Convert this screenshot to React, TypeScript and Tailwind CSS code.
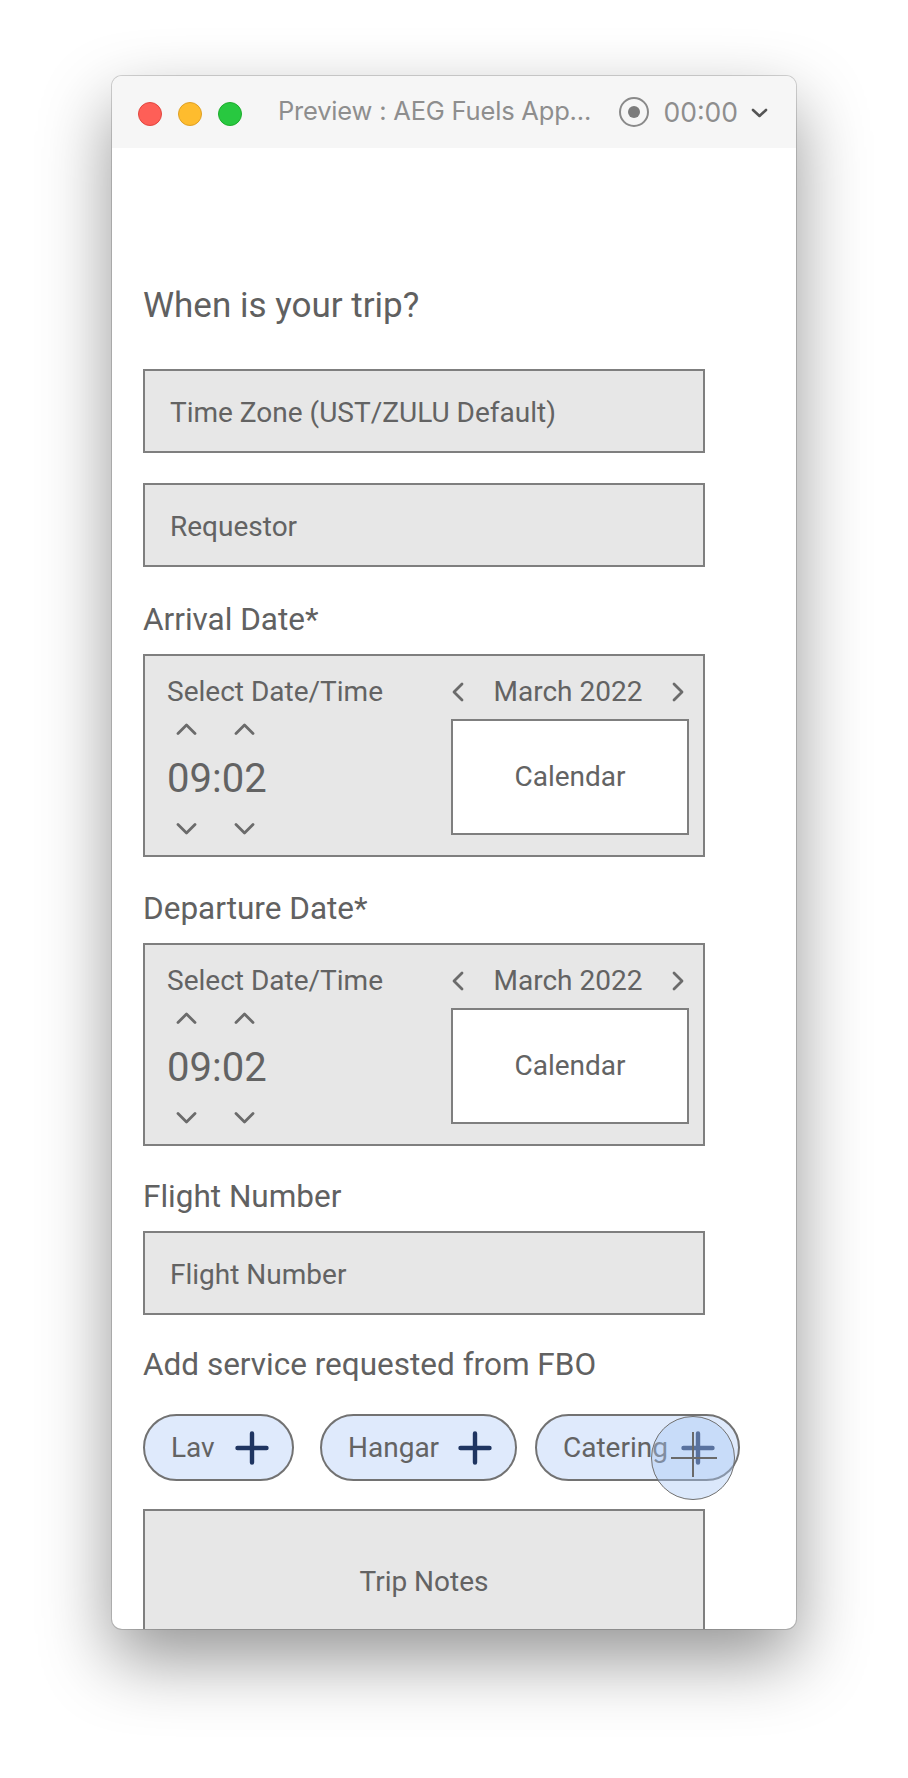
import React from "react";

const Up = () => (
  <svg width="21" height="12" viewBox="0 0 21 12" fill="none">
    <path d="M2 10.5 L10.5 2 L19 10.5" stroke="#6b6b6b" strokeWidth="2.8" strokeLinecap="round" strokeLinejoin="round" />
  </svg>
);
const Down = () => (
  <svg width="21" height="12" viewBox="0 0 21 12" fill="none">
    <path d="M2 1.5 L10.5 10 L19 1.5" stroke="#6b6b6b" strokeWidth="2.8" strokeLinecap="round" strokeLinejoin="round" />
  </svg>
);
const Left = () => (
  <svg width="13" height="20" viewBox="0 0 13 20" fill="none">
    <path d="M11 2 L3 10 L11 18" stroke="#6b6b6b" strokeWidth="2.8" strokeLinecap="round" strokeLinejoin="round" />
  </svg>
);
const Right = () => (
  <svg width="13" height="20" viewBox="0 0 13 20" fill="none">
    <path d="M2 2 L10 10 L2 18" stroke="#6b6b6b" strokeWidth="2.8" strokeLinecap="round" strokeLinejoin="round" />
  </svg>
);
const Plus = () => (
  <svg width="34" height="34" viewBox="0 0 34 34" fill="none">
    <path d="M17 2.5 V31.5 M2.5 17 H31.5" stroke="#1f3561" strokeWidth="4.4" strokeLinecap="round" />
  </svg>
);

function InputBox({ text }: { text: string }) {
  return (
    <div className="w-[562px] h-[84px] bg-[#e7e7e7] border-2 border-[#7f7f7f] flex items-center pl-[25px] pt-[4px] text-[28px] leading-[34px] text-[#636363]">
      {text}
    </div>
  );
}

function Label({ text, mt }: { text: string; mt: string }) {
  return <div className={`${mt} text-[31.5px] leading-[36px] text-[#616161]`}>{text}</div>;
}

function DateBox() {
  return (
    <div className="mt-[16px] w-[562px] h-[203px] bg-[#e7e7e7] border-2 border-[#7f7f7f] flex">
      <div className="pl-[22px] pt-[18px] flex flex-col">
        <div className="text-[28px] leading-[36px] text-[#636363]">Select Date/Time</div>
        <div className="mt-[13px] ml-[9px] flex gap-[37px]">
          <Up />
          <Up />
        </div>
        <div className="mt-[20px] text-[40px] leading-[48px] text-[#636363]">09:02</div>
        <div className="mt-[20px] ml-[9px] flex gap-[37px]">
          <Down />
          <Down />
        </div>
      </div>
      <div className="ml-auto mr-[14px] pt-[18px] w-[238px] flex flex-col">
        <div className="h-[36px] flex items-center justify-between pr-[4px]">
          <Left />
          <span className="text-[28px] leading-[36px] text-[#636363]">March 2022</span>
          <Right />
        </div>
        <div className="mt-[9px] h-[116px] bg-white border-2 border-[#7f7f7f] flex items-center justify-center text-[28px] text-[#636363]">
          Calendar
        </div>
      </div>
    </div>
  );
}

function Pill({ text, w, ml }: { text: string; w: string; ml: string }) {
  return (
    <div className={`${w} ${ml} h-[67px] rounded-full bg-[#dfeafc] border-2 border-[#727272] flex items-center justify-between pl-[26px] pr-[23px] text-[28px] text-[#636363]`}>
      <span>{text}</span>
      <Plus />
    </div>
  );
}

export default function App() {
  return (
    <div className="w-[908px] h-[1778px] bg-white pt-[76px] pl-[112px] font-['Roboto','Liberation_Sans',sans-serif]">
      <div className="w-[684px] h-[1553px] rounded-[10px] overflow-hidden bg-white flex flex-col shadow-[0_0_0_1px_rgba(0,0,0,0.16),0_30px_70px_rgba(0,0,0,0.42)]">
        <div className="h-[72px] shrink-0 bg-[#f6f6f6] flex items-center pl-[26px] pr-[28px] pt-[3px]">
          <div className="flex gap-[16px]">
            <div className="w-[24px] h-[24px] rounded-full bg-[#fe5f57] border border-[#e2463f]" />
            <div className="w-[24px] h-[24px] rounded-full bg-[#febc2e] border border-[#dfa024]" />
            <div className="w-[24px] h-[24px] rounded-full bg-[#28c840] border border-[#1dad2b]" />
          </div>
          <div className="ml-[36px] mb-[5px] text-[25.5px] leading-[30px] text-[#8e8e8e] font-['Inter','Noto_Sans',sans-serif] tracking-[-0.2px]">
            Preview : AEG Fuels App...
          </div>
          <div className="ml-auto mb-[4px] flex items-center">
            <div className="w-[30px] h-[30px] rounded-full border-2 border-[#8a8a8a] flex items-center justify-center">
              <div className="w-[12px] h-[12px] rounded-full bg-[#7c7c7c]" />
            </div>
            <div className="ml-[14px] text-[26.5px] leading-[30px] text-[#8e8e8e] font-['Inter','Noto_Sans',sans-serif]">00:00</div>
            <svg className="ml-[13px] mt-[3px]" width="17" height="10" viewBox="0 0 17 10" fill="none">
              <path d="M2 2 L8.5 8 L15 2" stroke="#555" strokeWidth="2.6" strokeLinecap="round" strokeLinejoin="round" />
            </svg>
          </div>
        </div>
        <div className="flex-1 overflow-hidden pl-[31px] pt-[138px]">
          <div className="text-[35px] leading-[40px] text-[#606060]">When is your trip?</div>
          <div className="mt-[43px]">
            <InputBox text="Time Zone (UST/ZULU Default)" />
          </div>
          <div className="mt-[30px]">
            <InputBox text="Requestor" />
          </div>
          <Label text="Arrival Date*" mt="mt-[35px]" />
          <DateBox />
          <Label text="Departure Date*" mt="mt-[34px]" />
          <DateBox />
          <Label text="Flight Number" mt="mt-[33px]" />
          <div className="mt-[16px]">
            <InputBox text="Flight Number" />
          </div>
          <Label text="Add service requested from FBO" mt="mt-[32px]" />
          <div className="relative mt-[31px] flex">
            <Pill text="Lav" w="w-[151px]" ml="ml-0" />
            <Pill text="Hangar" w="w-[197px]" ml="ml-[26px]" />
            <Pill text="Catering" w="w-[205px]" ml="ml-[18px]" />
            <div className="absolute left-[508px] top-[2px] w-[84px] h-[84px] rounded-full bg-[rgba(170,199,245,0.42)] border-[1.5px] border-[#6f6f6f]">
              <div className="absolute left-[19px] top-[40px] w-[46px] h-[1.5px] bg-[#6a6a6a]" />
              <div className="absolute left-[40px] top-[15px] w-[1.5px] h-[45px] bg-[#6a6a6a]" />
            </div>
          </div>
          <div className="mt-[28px] w-[562px] h-[142px] bg-[#e7e7e7] border-2 border-[#7f7f7f] flex items-center justify-center pt-[4px] text-[28px] text-[#636363]">
            Trip Notes
          </div>
        </div>
      </div>
    </div>
  );
}
